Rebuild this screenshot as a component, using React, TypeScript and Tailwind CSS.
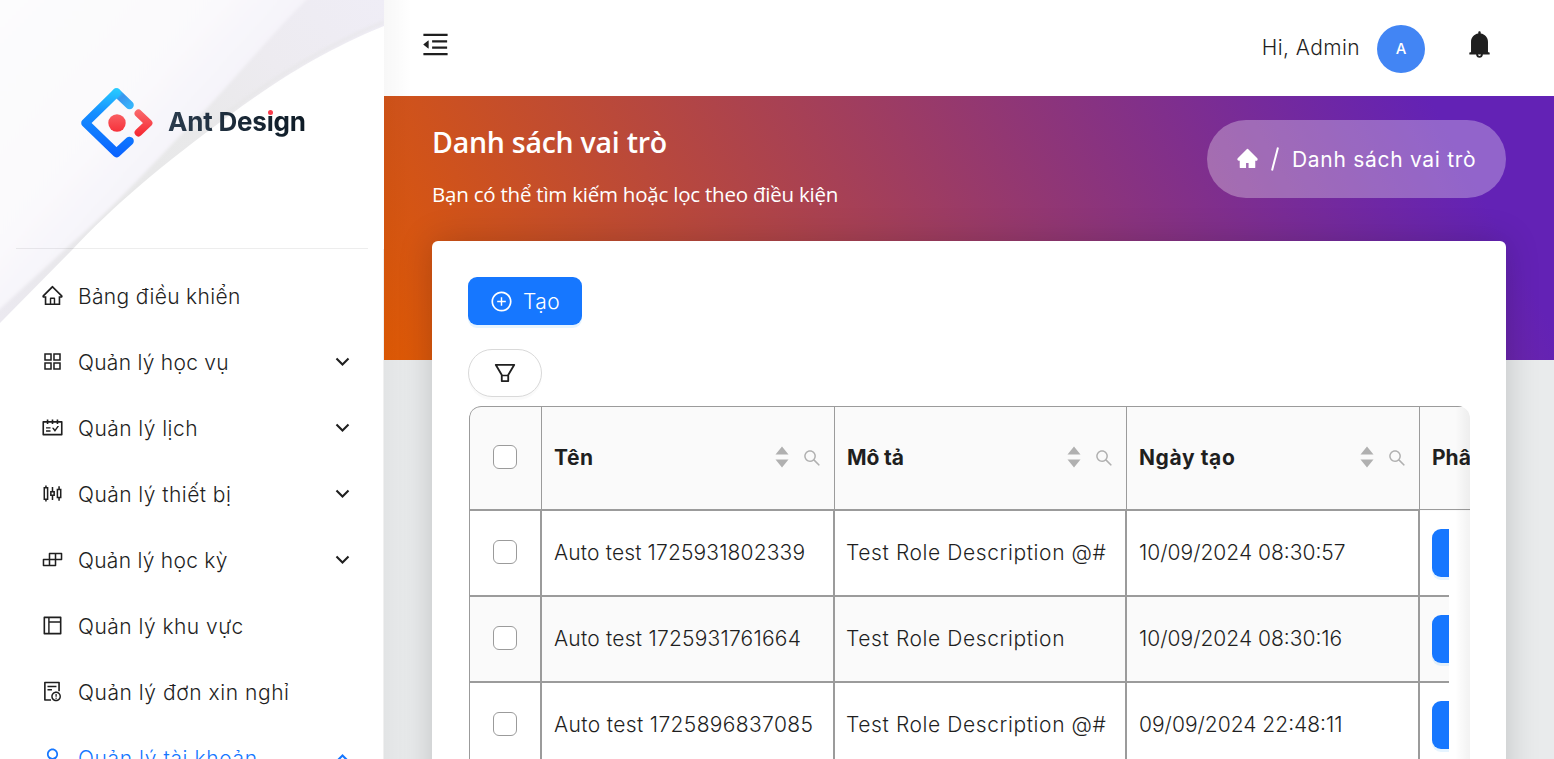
import type { ReactNode } from "react";
import type { IconType } from "react-icons";
import {
  AiFillBell,
  AiFillHome,
  AiOutlineAppstore,
  AiOutlineBuild,
  AiOutlineException,
  AiOutlineFilter,
  AiOutlineHome,
  AiOutlineLayout,
  AiOutlineMenuFold,
  AiOutlinePlusCircle,
  AiOutlineSchedule,
  AiOutlineSearch,
  AiOutlineSliders,
  AiOutlineUser,
} from "react-icons/ai";

type MenuEntry = {
  label: string;
  icon: IconType;
  arrow?: "down" | "up";
  active?: boolean;
  tracking: string;
};

const menu: MenuEntry[] = [
  { label: "Bảng điều khiển", icon: AiOutlineHome, tracking: "tracking-[0.33px]" },
  { label: "Quản lý học vụ", icon: AiOutlineAppstore, arrow: "down", tracking: "tracking-[0.27px]" },
  { label: "Quản lý lịch", icon: AiOutlineSchedule, arrow: "down", tracking: "tracking-[0.45px]" },
  { label: "Quản lý thiết bị", icon: AiOutlineSliders, arrow: "down", tracking: "tracking-[0.45px]" },
  { label: "Quản lý học kỳ", icon: AiOutlineBuild, arrow: "down", tracking: "tracking-[0.27px]" },
  { label: "Quản lý khu vực", icon: AiOutlineLayout, tracking: "tracking-[0.47px]" },
  { label: "Quản lý đơn xin nghỉ", icon: AiOutlineException, tracking: "tracking-[0.55px]" },
  { label: "Quản lý tài khoản", icon: AiOutlineUser, arrow: "up", active: true, tracking: "tracking-[0.6px]" },
];

const rows = [
  { name: "Auto test 1725931802339", desc: "Test Role Description @#", date: "10/09/2024 08:30:57", tracking: "tracking-[0.14px]" },
  { name: "Auto test 1725931761664", desc: "Test Role Description", date: "10/09/2024 08:30:16", tracking: "tracking-[0.22px]" },
  { name: "Auto test 1725896837085", desc: "Test Role Description @#", date: "09/09/2024 22:48:11", tracking: "tracking-[0.36px]" },
];

function SidebarWave() {
  return (
    <svg className="absolute inset-0" width="384" height="330" viewBox="0 0 384 330" aria-hidden="true">
      <defs>
        <linearGradient id="veil" x1="0" y1="0" x2="190" y2="170" gradientUnits="userSpaceOnUse">
          <stop offset="0" stopColor="#fcfcfd" />
          <stop offset="0.65" stopColor="#faf9fc" />
          <stop offset="1" stopColor="#f3f1f8" />
        </linearGradient>
        <linearGradient id="fold" x1="0" y1="324" x2="384" y2="0" gradientUnits="userSpaceOnUse">
          <stop offset="0" stopColor="#ebe9f0" />
          <stop offset="0.3" stopColor="#e7e7e8" />
          <stop offset="0.55" stopColor="#e9e9ea" />
          <stop offset="0.75" stopColor="#edebf0" />
          <stop offset="1" stopColor="#efedf6" />
        </linearGradient>
        <filter id="soft" x="-5%" y="-5%" width="110%" height="110%">
          <feGaussianBlur stdDeviation="1.5" />
        </filter>
      </defs>
      <path d="M0 0H384V26C320 52 272 84 230 115C165 162 112 207 72 250L0 323Z" fill="url(#fold)" />
      <path d="M-10 -10H316L306 0C270 36 238 75 205 110C170 145 118 204 72 243L-10 318Z" fill="url(#veil)" filter="url(#soft)" />
      <path d="M384 22C325 46 265 82 205 130" stroke="#e4e4e4" strokeWidth="3" fill="none" opacity="0.5" filter="url(#soft)" />
    </svg>
  );
}

function Logo() {
  return (
    <div className="flex h-[70px] items-center">
      <svg width="74" height="70" viewBox="-0.500 0 74 70" fill="none" strokeWidth="8.600" strokeLinecap="round" strokeLinejoin="round">
        <defs>
          <linearGradient id="blueA" x1="36" y1="0" x2="30" y2="70" gradientUnits="userSpaceOnUse">
            <stop offset="0" stopColor="#29cdff" />
            <stop offset="0.38" stopColor="#148eff" />
            <stop offset="1" stopColor="#0a60ff" />
          </linearGradient>
          <linearGradient id="blueB" x1="37" y1="4" x2="50" y2="18" gradientUnits="userSpaceOnUse">
            <stop offset="0" stopColor="#29c5ff" />
            <stop offset="0.35" stopColor="#3a95ee" />
            <stop offset="1" stopColor="#37b4fb" />
          </linearGradient>
          <linearGradient id="red" x1="36" y1="20" x2="36" y2="50" gradientUnits="userSpaceOnUse">
            <stop offset="0" stopColor="#fa6e70" />
            <stop offset="1" stopColor="#f5222d" />
          </linearGradient>
        </defs>
        <path d="M36 4.600L49 17" stroke="url(#blueB)" />
        <path d="M49 53L36 65L5 35L36 4.600" stroke="url(#blueA)" />
        <path d="M58 25.500L68 35L58 44.500" stroke="url(#red)" strokeWidth="7.800" />
        <circle cx="36.500" cy="35" r="8.700" fill="url(#red)" />
      </svg>
      <div className="relative -mt-[3px] ml-[14px] bg-linear-to-r from-[#2b3c4e] to-[#0e1b26] bg-clip-text font-['Inter'] text-[26px] leading-[34px] font-bold tracking-[-0.2px] whitespace-nowrap text-transparent">
        Ant Des&#305;gn
        <span className="absolute top-[5px] left-[99.5px] size-[5px] rounded-full bg-[#fa3c4c]" />
      </div>
    </div>
  );
}

function Chevron({ up }: { up?: boolean }) {
  return (
    <svg className={up ? "rotate-180" : ""} width="15" height="10" viewBox="0 0 15 10" fill="none" stroke="currentColor" strokeWidth="2.100">
      <path d="M1.500 1.500L7.500 7.500L13.500 1.500" />
    </svg>
  );
}

function Sidebar() {
  return (
    <aside className="relative z-20 h-full w-[384px] shrink-0 overflow-hidden bg-white">
      <SidebarWave />
      <div className="relative mx-4 flex h-[249px] items-start border-b border-black/7 pt-[88px] pl-[64px]">
        <Logo />
      </div>
      <nav className="relative h-[510px] overflow-hidden border-r border-[#f0f0f0] pt-[15px]">
        {menu.map((m) => {
          const Icon = m.icon;
          return (
            <div key={m.label} className={`flex h-[66px] items-center pr-[33px] pl-[41px] ${m.active ? "text-[#1677ff]" : "text-[#1f1f1f]"}`}>
              <Icon size={23} className="-mt-[3px]" />
              <span className={`ml-[14px] grow text-[21px] font-light whitespace-nowrap ${m.tracking}`}>{m.label}</span>
              {m.arrow && (
                <span className="-mt-[2px]">
                  <Chevron up={m.arrow === "up"} />
                </span>
              )}
            </div>
          );
        })}
      </nav>
    </aside>
  );
}

function Checkbox() {
  return <span className="block size-6 rounded-[6px] border border-[#9b9b9b] bg-white" />;
}

function HeadCell({ children, className }: { children: ReactNode; className: string }) {
  return (
    <div className={`flex h-[105px] shrink-0 items-center border-t border-r border-b-2 border-[#9b9b9b] pr-[12px] pl-[12px] ${className}`}>
      <span className="grow text-[21px] font-bold">{children}</span>
      <svg className="-mt-[2px] mr-[13px]" width="14" height="22" viewBox="0 0 14 22" fill="#b0b0b0">
        <path d="M7 0.500L13.500 8.500H0.500ZM7 21.500L0.500 13.500H13.500Z" />
      </svg>
      <AiOutlineSearch size={20} className="text-[#b0b0b0]" />
    </div>
  );
}

function Table() {
  return (
    <div className="relative ml-px h-[360px] w-[1001px] overflow-hidden rounded-t-[12px] text-[#1f1f1f]">
      <div className="flex w-[1100px] rounded-tl-[12px] border-l border-[#9b9b9b] bg-[#fafafa]">
        <div className="flex h-[105px] w-[72px] shrink-0 items-center justify-center rounded-tl-[11px] border-t border-r border-b-2 border-[#9b9b9b] pr-px pb-[2px]">
          <Checkbox />
        </div>
        <HeadCell className="w-[293px] tracking-[0.5px]">Tên</HeadCell>
        <HeadCell className="w-[292px] tracking-[-0.1px]">Mô tả</HeadCell>
        <HeadCell className="w-[293px] tracking-[0.6px]">Ngày tạo</HeadCell>
        <div className="flex h-[104px] grow items-center border-t border-b border-[#9b9b9b] pl-[12px] text-[21px] font-bold whitespace-nowrap">Phân quyền</div>
      </div>
      <div className="w-[980px] overflow-hidden border-l border-[#9b9b9b] text-[21px] font-light whitespace-nowrap">
        {rows.map((r, i) => (
          <div key={r.name} className={`flex h-[86px] w-[1100px] *:border-b-2 *:border-[#9b9b9b] ${i % 2 ? "bg-[#fafafa]" : "bg-white"}`}>
            <div className="flex w-[72px] shrink-0 items-center justify-center border-r-2 pb-[2px]">
              <Checkbox />
            </div>
            <div className={`flex w-[293px] shrink-0 items-center border-r-2 pl-[12px] ${r.tracking}`}>{r.name}</div>
            <div className="flex w-[292px] shrink-0 items-center border-r-2 pl-[11px] tracking-[0.6px]">{r.desc}</div>
            <div className="flex w-[293px] shrink-0 items-center border-r-2 pl-[12px]">{r.date}</div>
            <div className="flex grow items-center pl-[12px]">
              <span className="h-12 w-[110px] rounded-[9px] bg-[#1677ff] shadow-[0_3px_0_rgba(5,145,255,0.1)]" />
            </div>
          </div>
        ))}
      </div>
      <div className="absolute inset-y-0 right-0 w-[15px] rounded-tr-[12px] bg-linear-to-r from-transparent to-black/5" />
    </div>
  );
}

function Header() {
  return (
    <header className="flex h-24 shrink-0 items-center bg-white pr-[60px] pl-[36px] text-[#1f1f1f]">
      <AiOutlineMenuFold size={31} className="-mt-[7px]" />
      <span className="ml-auto text-[21px] font-light tracking-[0.4px]">Hi, Admin</span>
      <span className="mt-[2px] ml-[17px] flex size-12 items-center justify-center rounded-full bg-[#4285f4] text-[15px] font-medium text-white">A</span>
      <AiFillBell size={31} className="-mt-[8px] mr-[-1px] ml-[39px]" />
    </header>
  );
}

export default function App() {
  return (
    <div className="flex h-[759px] w-[1554px] overflow-hidden bg-[#e9ebec] font-['Inter','Noto_Sans',sans-serif]">
      <Sidebar />
      <main className="relative flex min-w-0 grow flex-col">
        <Header />
        <section className="h-[264px] shrink-0 bg-[linear-gradient(62deg,#e05a04_0%,#6322b5_90.5%)] px-12 pt-6 text-white">
          <div className="flex items-start justify-between">
            <div className="font-['Open_Sans','Noto_Sans',sans-serif] whitespace-nowrap">
              <h1 className="text-[28.500px] leading-[44px] font-semibold tracking-[-0.25px]">Danh sách vai trò</h1>
              <p className="mt-[14px] text-[20.500px] leading-[32px] tracking-[-0.22px]">Bạn có thể tìm kiếm hoặc lọc theo điều kiện</p>
            </div>
            <div className="flex h-[78px] w-[299px] items-center rounded-full bg-white/30 pl-[29px]">
              <AiFillHome size={23} className="-mt-[2px]" />
              <svg className="ml-[12px]" width="8" height="24" viewBox="0 0 8 24" fill="none" stroke="currentColor" strokeWidth="2">
                <path d="M7 0.500L1 23.500" />
              </svg>
              <span className="mt-[2px] ml-[13px] text-[21px] tracking-[0.7px] whitespace-nowrap">Danh sách vai trò</span>
            </div>
          </div>
        </section>
        <section className="relative mx-12 -mt-[119px] h-[560px] shrink-0 rounded-t-[6px] bg-white px-9 pt-9 shadow-[0_0_34px_rgba(0,0,0,0.18)]">
          <button className="flex h-12 w-[114px] items-center rounded-[9px] bg-[#1677ff] pl-[22px] text-[21px] font-light text-white shadow-[0_3px_0_rgba(5,145,255,0.1)]">
            <AiOutlinePlusCircle size={23} />
            <span className="mt-[2px] ml-[10px] tracking-[0.4px]">Tạo</span>
          </button>
          <button className="mt-6 mb-[9px] flex h-12 w-[74px] items-center justify-center rounded-full border border-[#d9d9d9] bg-white text-[#1f1f1f] shadow-[0_3px_0_rgba(0,0,0,0.02)]">
            <AiOutlineFilter size={26} />
          </button>
          <Table />
        </section>
        <div className="pointer-events-none absolute inset-y-0 left-0 w-[28px] bg-linear-to-r from-black/3 to-transparent" />
      </main>
    </div>
  );
}
